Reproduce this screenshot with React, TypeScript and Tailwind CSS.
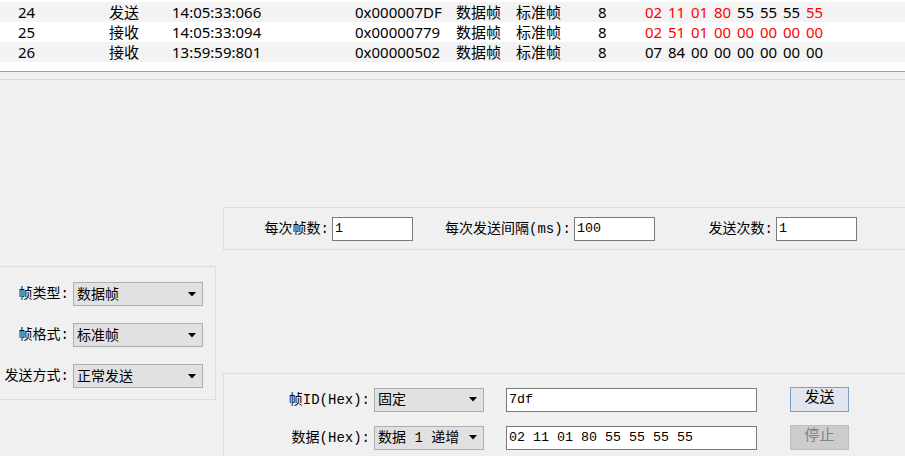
import React from 'react';

type Row = {
  no: number;
  dir: string;
  time: string;
  id: string;
  type: string;
  fmt: string;
  dlc: number;
  data: { v: string; red: boolean }[];
};

const bytes = (s: string, red: boolean[]) =>
  s.split(' ').map((v, i) => ({ v, red: red[i] }));

const rows: Row[] = [
  {
    no: 24,
    dir: '发送',
    time: '14:05:33:066',
    id: '0x000007DF',
    type: '数据帧',
    fmt: '标准帧',
    dlc: 8,
    data: bytes('02 11 01 80 55 55 55 55', [true, true, true, true, false, false, false, true]),
  },
  {
    no: 25,
    dir: '接收',
    time: '14:05:33:094',
    id: '0x00000779',
    type: '数据帧',
    fmt: '标准帧',
    dlc: 8,
    data: bytes('02 51 01 00 00 00 00 00', Array(8).fill(true)),
  },
  {
    no: 26,
    dir: '接收',
    time: '13:59:59:801',
    id: '0x00000502',
    type: '数据帧',
    fmt: '标准帧',
    dlc: 8,
    data: bytes('07 84 00 00 00 00 00 00', Array(8).fill(false)),
  },
];

// 对话框字体：ASCII 等宽，中文黑体
const dlgFont = { fontFamily: '"Liberation Mono", "Noto Sans CJK SC", monospace' };

function TextBox({ value, className }: { value: string; className: string }) {
  return (
    <div
      className={`h-[24px] bg-white border border-[#7a7a7a] flex items-center pl-[2px] text-[13.33px] text-black ${className}`}
      style={dlgFont}
    >
      {value}
    </div>
  );
}

function Select({ value, className }: { value: string; className: string }) {
  return (
    <div
      className={`h-[24px] bg-[#e1e1e1] border border-[#adadad] flex items-center justify-between pl-[3px] pr-[6px] text-[14px] leading-[22px] text-black ${className}`}
      style={dlgFont}
    >
      <span className="whitespace-nowrap pt-[1px]">{value}</span>
      <svg width="8" height="5" viewBox="0 0 8 5" className="shrink-0">
        <path d="M0 0h8L4 4.5z" fill="#000" />
      </svg>
    </div>
  );
}

function Label({ text, className }: { text: string; className: string }) {
  return (
    <div
      className={`flex justify-end whitespace-nowrap text-[14px] pt-[1px] pr-[1px] text-black ${className}`}
      style={dlgFont}
    >
      <span>{text}</span>
    </div>
  );
}

export default function App() {
  return (
    <div className="w-[905px] h-[456px] overflow-hidden bg-[#f0f0f0] flex flex-col">
      {/* 报文列表 */}
      <div
        className="h-[72px] shrink-0 bg-white border-b border-[#a0a0a0] pt-[2px] text-[15px] text-black"
        style={{ fontFamily: '"Noto Sans", "Noto Sans CJK SC", sans-serif' }}
      >
        {rows.map((r, i) => (
          <div
            key={r.no}
            className={`h-[20px] flex items-center whitespace-nowrap leading-none ${i % 2 === 0 ? 'bg-[#f3f3f3]' : 'bg-white'}`}
          >
            <span className="w-[109px] pl-[18px]">{r.no}</span>
            <span className="w-[63px]">{r.dir}</span>
            <span className="w-[183px]">{r.time}</span>
            <span className="w-[101px]">{r.id}</span>
            <span className="w-[60px]">{r.type}</span>
            <span className="w-[82px]">{r.fmt}</span>
            <span className="w-[47px]">{r.dlc}</span>
            <span className="flex">
              {r.data.map((b, j) => (
                <span key={j} className={`w-[23px] ${b.red ? 'text-[#ff0000]' : ''}`}>
                  {b.v}
                </span>
              ))}
            </span>
          </div>
        ))}
      </div>
      <div className="h-[8px] shrink-0 border-b border-[#dadada]" />

      {/* 发送设置 */}
      <div className="flex flex-col flex-1">
        <div className="mt-[127px] ml-[223px] h-[43px] border border-r-0 border-[#dcdcdc] flex items-center">
          <Label text="每次帧数:" className="w-[106px]" />
          <TextBox value="1" className="ml-[2px] w-[81px]" />
          <Label text="每次发送间隔(ms):" className="w-[159px]" />
          <TextBox value="100" className="ml-[2px] w-[81px]" />
          <Label text="发送次数:" className="w-[119px]" />
          <TextBox value="1" className="ml-[2px] w-[81px]" />
        </div>

        <div className="flex flex-1">
          <div className="mt-[16px] w-[216px] h-[134px] border border-l-0 border-[#dcdcdc] flex flex-col gap-[17px] pt-[15px]">
            <div className="flex items-center">
              <Label text="帧类型:" className="w-[70px]" />
              <Select value="数据帧" className="ml-[3px] w-[130px]" />
            </div>
            <div className="flex items-center">
              <Label text="帧格式:" className="w-[70px]" />
              <Select value="标准帧" className="ml-[3px] w-[130px]" />
            </div>
            <div className="flex items-center">
              <Label text="发送方式:" className="w-[70px]" />
              <Select value="正常发送" className="ml-[3px] w-[130px]" />
            </div>
          </div>

          <div className="mt-[123px] ml-[7px] flex-1 border-t border-l border-[#dcdcdc] flex flex-col gap-[13px] pt-[13px]">
            <div className="flex items-center">
              <Label text="帧ID(Hex):" className="w-[147px]" />
              <Select value="固定" className="ml-[3px] w-[110px]" />
              <TextBox value="7df" className="ml-[22px] w-[251px]" />
              <button
                className="ml-[33px] w-[59px] h-[25px] bg-[#e1e6ee] border border-[#7a9ec8] text-[15px] text-black flex items-center justify-center"
                style={dlgFont}
              >
                发送
              </button>
            </div>
            <div className="flex items-center">
              <Label text="数据(Hex):" className="w-[147px]" />
              <Select value="数据 1 递增" className="ml-[3px] w-[110px]" />
              <TextBox value="02 11 01 80 55 55 55 55" className="ml-[22px] w-[251px]" />
              <button
                disabled
                className="ml-[33px] w-[59px] h-[25px] bg-[#cccccc] border border-[#bfbfbf] text-[15px] text-[#838383] flex items-center justify-center"
                style={dlgFont}
              >
                停止
              </button>
            </div>
          </div>
        </div>
      </div>
    </div>
  );
}
